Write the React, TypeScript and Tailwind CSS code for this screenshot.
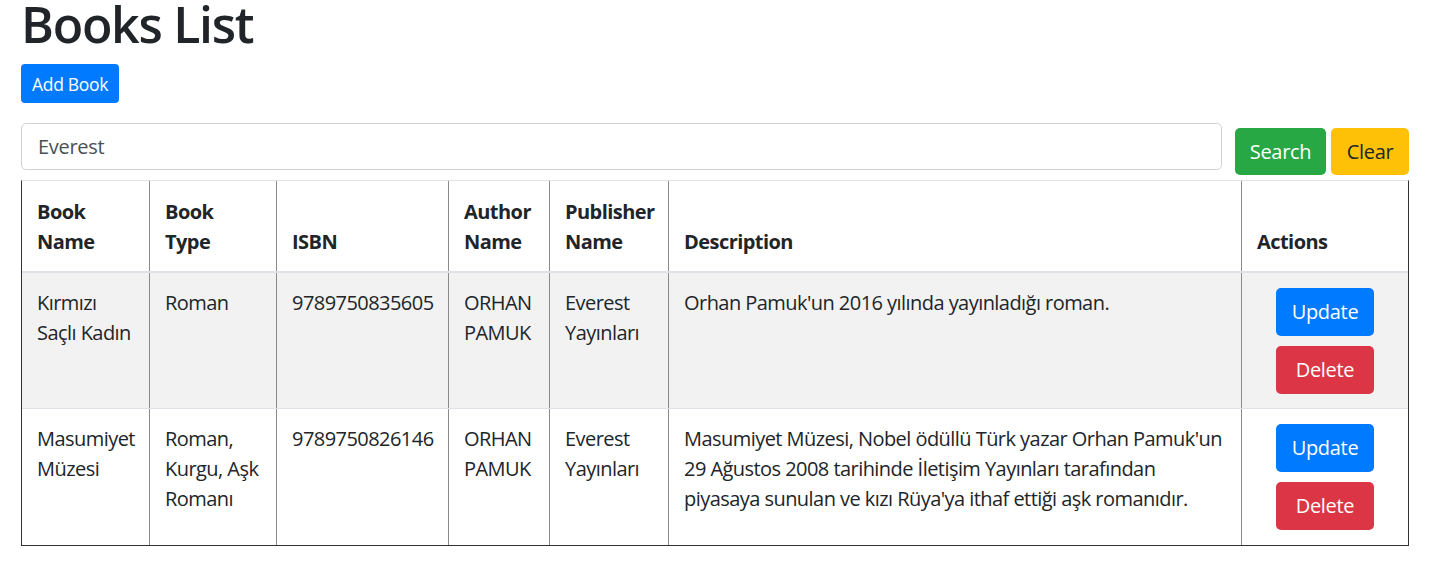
import React from "react";

const cols = "grid grid-cols-[128px_127px_172px_101px_119px_573px_166px]";

type Row = {
  name: React.ReactNode;
  type: React.ReactNode;
  isbn: string;
  author: React.ReactNode;
  publisher: React.ReactNode;
  desc: React.ReactNode;
};

const rows: Row[] = [
  {
    name: (
      <>
        Kırmızı
        <br />
        Saçlı Kadın
      </>
    ),
    type: "Roman",
    isbn: "9789750835605",
    author: (
      <>
        ORHAN
        <br />
        PAMUK
      </>
    ),
    publisher: (
      <>
        Everest
        <br />
        Yayınları
      </>
    ),
    desc: "Orhan Pamuk'un 2016 yılında yayınladığı roman.",
  },
  {
    name: (
      <>
        Masumiyet
        <br />
        Müzesi
      </>
    ),
    type: (
      <>
        Roman,
        <br />
        Kurgu, Aşk
        <br />
        Romanı
      </>
    ),
    isbn: "9789750826146",
    author: (
      <>
        ORHAN
        <br />
        PAMUK
      </>
    ),
    publisher: (
      <>
        Everest
        <br />
        Yayınları
      </>
    ),
    desc: (
      <>
        Masumiyet Müzesi, Nobel ödüllü Türk yazar Orhan Pamuk'un
        <br />
        29 Ağustos 2008 tarihinde İletişim Yayınları tarafından
        <br />
        piyasaya sunulan ve kızı Rüya'ya ithaf ettiği aşk romanıdır.
      </>
    ),
  },
];

const cellBorder = "border-r border-[#8a8a8a]";

export default function App() {
  return (
    <div
      className="w-[1453px] h-[577px] bg-white text-[#212529] overflow-hidden"
      style={{ fontFamily: "'Open Sans', 'Noto Sans', sans-serif" }}
    >
      <div className="ml-[21px] w-[1388px]">
        <h1 className="text-[50px] leading-[48px] font-[550] mb-[16px] tracking-[-1.3px] whitespace-nowrap">
          Books List
        </h1>
        <button className="h-[39px] px-[11px] rounded-[4px] bg-[#007bff] text-white text-[17.5px] leading-[26px] tracking-[-0.3px]">
          Add Book
        </button>
        <div className="flex items-start h-[47px] mt-[20px]">
          <div className="flex-1 h-[47px] border border-[#ced4da] rounded-[5px] flex items-center pl-[16px] text-[20px] text-[#495057] tracking-[-0.3px]">
            Everest
          </div>
          <button className="ml-[13px] mt-[5px] w-[91px] h-[47px] rounded-[5px] bg-[#28a745] text-white text-[20px] tracking-[-0.3px]">
            Search
          </button>
          <button className="ml-[5px] mt-[5px] w-[78px] h-[47px] rounded-[5px] bg-[#ffc107] text-[#212529] text-[20px] tracking-[-0.3px]">
            Clear
          </button>
        </div>
        <div className="mt-[10px] border-t border-t-[#dee2e6] border-l border-r border-b border-l-[#333] border-r-[#333] border-b-[#333] text-[20px] leading-[30px] tracking-[-0.55px] whitespace-nowrap">
          <div className={`${cols} h-[92px] border-b-2 border-[#dee2e6] font-bold`}>
            {[
              <>
                Book
                <br />
                Name
              </>,
              <>
                Book
                <br />
                Type
              </>,
              "ISBN",
              <>
                Author
                <br />
                Name
              </>,
              <>
                Publisher
                <br />
                Name
              </>,
              "Description",
              "Actions",
            ].map((h, i) => (
              <div
                key={i}
                className={`flex items-end px-[15px] pb-[14px] ${i < 6 ? cellBorder : ""}`}
              >
                <div>{h}</div>
              </div>
            ))}
          </div>
          {rows.map((r, ri) => (
            <div
              key={ri}
              className={`${cols} h-[136px] ${ri === 0 ? "bg-[#f2f2f2] border-b border-[#dee2e6]" : ""}`}
            >
              {[r.name, r.type, r.isbn, r.author, r.publisher, r.desc].map((c, ci) => (
                <div key={ci} className={`px-[15px] pt-[15px] ${cellBorder}`}>
                  {c}
                </div>
              ))}
              <div className="flex flex-col items-center pt-[15px] gap-[10px]">
                <button className="w-[98px] h-[48px] rounded-[5px] bg-[#007bff] text-white text-[20px] tracking-[-0.3px]">
                  Update
                </button>
                <button className="w-[98px] h-[48px] rounded-[5px] bg-[#dc3545] text-white text-[20px] tracking-[-0.3px]">
                  Delete
                </button>
              </div>
            </div>
          ))}
        </div>
      </div>
    </div>
  );
}
